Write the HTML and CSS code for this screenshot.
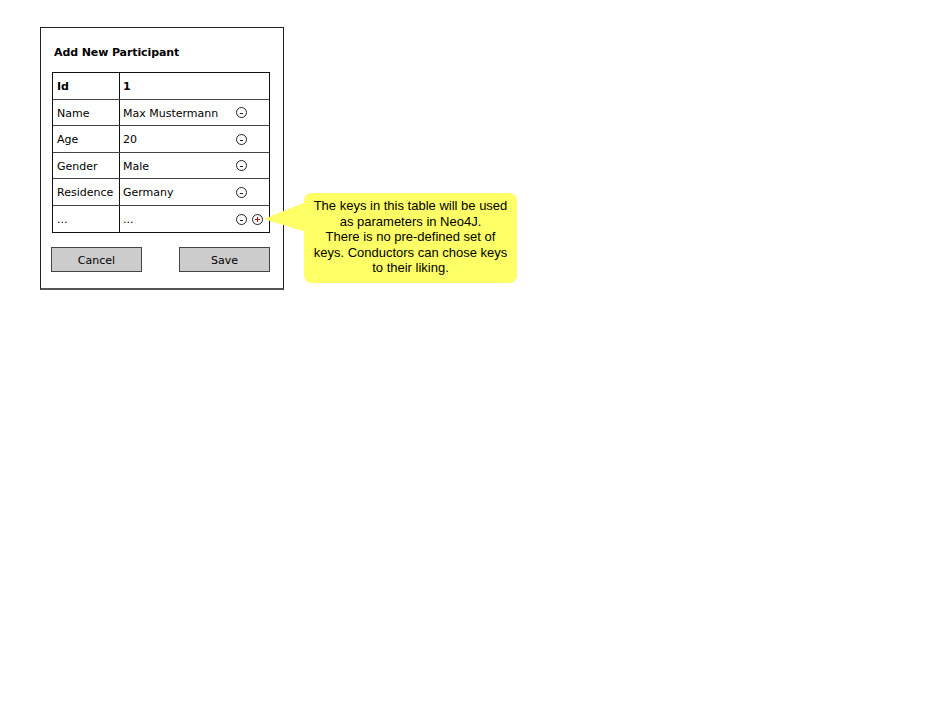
FILE: index.html
```html
<!DOCTYPE html>
<html>
<head>
<meta charset="utf-8">
<link rel="stylesheet" href="styles.css">
</head>
<body>
<div class="canvas">
  <div class="dialog">
    <div class="title">Add New Participant</div>
    <div class="table">
      <div class="row head"><div class="key">Id</div><div class="val">1</div></div>
      <div class="row"><div class="key">Name</div><div class="val">Max Mustermann<span class="icons"><span class="ic minus"></span></span></div></div>
      <div class="row"><div class="key">Age</div><div class="val">20<span class="icons"><span class="ic minus"></span></span></div></div>
      <div class="row"><div class="key">Gender</div><div class="val">Male<span class="icons"><span class="ic minus"></span></span></div></div>
      <div class="row"><div class="key">Residence</div><div class="val">Germany<span class="icons"><span class="ic minus"></span></span></div></div>
      <div class="row last"><div class="key">...</div><div class="val">...<span class="icons"><span class="ic minus"></span><span class="ic plus"></span></span></div></div>
    </div>
    <div class="buttons">
      <div class="btn">Cancel</div>
      <div class="btn">Save</div>
    </div>
  </div>
  <div class="callout">
    <svg class="pointer" width="42" height="32" viewBox="0 0 42 32"><polygon points="0,17 42,0 42,30" fill="#ffff66"/></svg>
    <p>The keys in this table will be used<br>as parameters in Neo4J.<br>There is no pre-defined set of<br>keys. Conductors can chose keys<br>to their liking.</p>
  </div>
</div>
</body>
</html>
```

FILE: styles.css
```css
html, body {
  margin: 0;
  padding: 0;
  background: #fff;
}
.canvas {
  display: flex;
  align-items: flex-start;
  padding: 27px 0 0 40px;
}
.dialog {
  box-sizing: border-box;
  width: 244px;
  height: 263px;
  border: 1px solid #222;
  border-bottom: 2px solid #555;
  padding: 18px 12px 0 11px;
  font-family: "DejaVu Sans", sans-serif;
  font-size: 11px;
  color: #000;
}
.title {
  font-weight: bold;
  font-size: 11px;
  height: 26px;
  padding-left: 2px;
  letter-spacing: -0.1px;
}
.table {
  width: 218px;
  border: 1px solid #111;
  box-sizing: border-box;
}
.row {
  display: flex;
  height: 26.5px;
  border-bottom: 1px solid #444;
  box-sizing: border-box;
  padding-top: 2px;
}
.row.last {
  border-bottom: none;
  height: 26px;
}
.row.head {
  font-weight: bold;
}
.key {
  box-sizing: border-box;
  width: 67px;
  border-right: 1px solid #111;
  margin-top: -2px;
  padding-left: 4px;
  padding-top: 2px;
  display: flex;
  align-items: center;
}
.val {
  flex: 1;
  padding-left: 3px;
  display: flex;
  align-items: center;
  color: #000;
}
.icons {
  margin-left: auto;
  margin-right: 6px;
  width: 27px;
  display: flex;
  gap: 5px;
  margin-top: -1px;
}
.ic {
  width: 11px;
  height: 11px;
  border: 1px solid #222;
  border-radius: 50%;
  box-sizing: border-box;
  position: relative;
}
.ic.minus::after {
  content: "";
  position: absolute;
  left: 3px;
  top: 5px;
  width: 3px;
  height: 1px;
  background: #222;
}
.ic.plus::before,
.ic.plus::after {
  content: "";
  position: absolute;
  background: #b00;
}
.ic.plus::before {
  left: 2px;
  top: 4px;
  width: 5px;
  height: 1px;
}
.ic.plus::after {
  left: 4px;
  top: 2px;
  width: 1px;
  height: 5px;
}
.buttons {
  display: flex;
  justify-content: space-between;
  margin-top: 14px;
  margin-left: -1px;
  width: 219px;
}
.btn {
  box-sizing: border-box;
  width: 91px;
  height: 25px;
  background: #cccccc;
  border: 1px solid #444;
  display: flex;
  align-items: center;
  justify-content: center;
  font-size: 11px;
  padding-top: 3px;
}
.callout {
  position: relative;
  box-sizing: border-box;
  width: 213px;
  height: 90px;
  margin-left: 20px;
  margin-top: 166px;
  background: #ffff66;
  border-radius: 8px;
  font-family: "Liberation Sans", Arial, sans-serif;
  font-size: 13px;
  line-height: 15.6px;
  text-align: center;
  color: #000;
  padding: 5px 2px 0;
}
.callout p {
  margin: 0;
}
.pointer {
  position: absolute;
  left: -40px;
  top: 9px;
}
```
